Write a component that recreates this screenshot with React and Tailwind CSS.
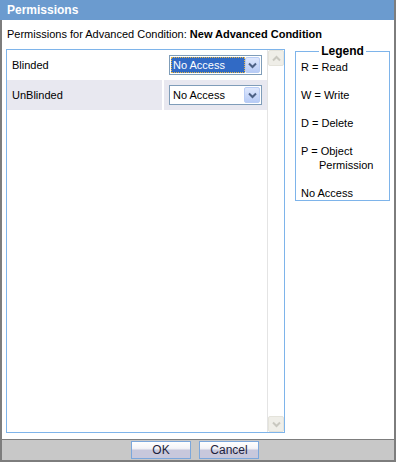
import React from 'react'

const font = { fontFamily: '"Liberation Sans", Arial, sans-serif' }

const Chevron = ({ up = false, color = '#4d6185', size = 9 }) => (
  <svg width={size} height={size} viewBox="0 0 9 9" className={up ? 'rotate-180' : ''}>
    <path d="M1 2.5 L4.5 6 L8 2.5" fill="none" stroke={color} strokeWidth="2" />
  </svg>
)

const Select = ({ focused }) => (
  <div className="flex h-[20px] w-[93px] items-center border border-[#7f9db9] bg-white pl-[1px] pr-[1px]">
    <div className="flex h-[16px] flex-1 items-center">
      <span
        className={
          focused
            ? 'flex h-[16px] w-[74px] items-center border border-dotted border-[#e6b64a] bg-[#316ac5] pl-[1px] text-white'
            : 'pl-[2px] text-black'
        }
      >
        No Access
      </span>
    </div>
    <div className="flex h-[16px] w-[16px] items-center justify-center rounded-[2px] border border-[#b9cdf5] bg-[linear-gradient(#dfe8fd,#b7cbf6)]">
      <Chevron />
    </div>
  </div>
)

const ScrollArrow = ({ up }) => (
  <div className="flex h-[16px] w-[16px] items-center justify-center rounded-[2px] border border-[#e4e3db] bg-[#efeee8]">
    <Chevron up={up} color="#c9c8c0" />
  </div>
)

const rows = [
  { label: 'Blinded', focused: true, bg: 'bg-white' },
  { label: 'UnBlinded', focused: false, bg: 'bg-[#e8e8f0]' },
]

export default function App() {
  return (
    <div className="flex h-[462px] w-[396px] flex-col border-r-2 border-[#7d7d7d] bg-white text-[11px] text-black" style={font}>
      {/* title */}
      <div className="flex h-[20px] shrink-0 items-center bg-[#6b9bcf] pl-[7px] text-[12px] font-bold text-white">
        Permissions
      </div>

      <div className="flex flex-1 flex-col border-b-2 border-l-2 border-[#7d7d7d]">
        <div className="flex h-[29px] shrink-0 items-center pb-[1px] pl-[5px]">
          Permissions for Advanced Condition:&nbsp;<span className="font-bold">New Advanced Condition</span>
        </div>

        <div className="flex h-[384px] shrink-0 pl-[4px]">
          {/* main panel */}
          <div className="flex h-[384px] w-[279px] border border-[#7eb4ea]">
            <div className="flex flex-1 flex-col">
              {rows.map((r) => (
                <div key={r.label} className="flex h-[30px]">
                  <div className={`flex w-[155px] items-center pl-[5px] ${r.bg}`}>{r.label}</div>
                  <div className={`ml-[2px] flex flex-1 items-center pl-[5px] ${r.bg}`}>
                    <Select focused={r.focused} />
                  </div>
                </div>
              ))}
            </div>
            <div className="flex w-[17px] flex-col justify-between border-l border-[#e4e4e4] bg-white">
              <ScrollArrow up />
              <ScrollArrow />
            </div>
          </div>

          {/* legend */}
          <fieldset className="ml-[10px] mt-[-5px] h-[157px] w-[95px] border border-[#7eb4ea] px-[5px]">
            <legend className="mx-auto px-[2px] text-[12px] font-bold leading-[14px]">Legend</legend>
            <div className="flex flex-col gap-[14px] pt-[2px] leading-[14px]">
              <div>R = Read</div>
              <div>W = Write</div>
              <div>D = Delete</div>
              <div>
                P = Object
                <div className="pl-[18px]">Permission</div>
              </div>
              <div>No Access</div>
            </div>
          </fieldset>
        </div>

        <div className="mt-[6px] flex flex-1 items-center justify-center gap-[8px] border-t border-[#7d7d7d] bg-[#c8c8c8] pb-[1px] pr-[6px] text-[12px]">
          <button className="h-[18px] w-[60px] border border-[#7ba7dc] bg-[linear-gradient(#ffffff_0%,#f4f4f8_40%,#c8c8dc_52%,#c8c8dc_100%)] leading-[16px] text-[#1e1e3c]">
            OK
          </button>
          <button className="h-[18px] w-[60px] border border-[#7ba7dc] bg-[linear-gradient(#ffffff_0%,#f4f4f8_40%,#c8c8dc_52%,#c8c8dc_100%)] leading-[16px] text-[#1e1e3c]">
            Cancel
          </button>
        </div>
      </div>
    </div>
  )
}
